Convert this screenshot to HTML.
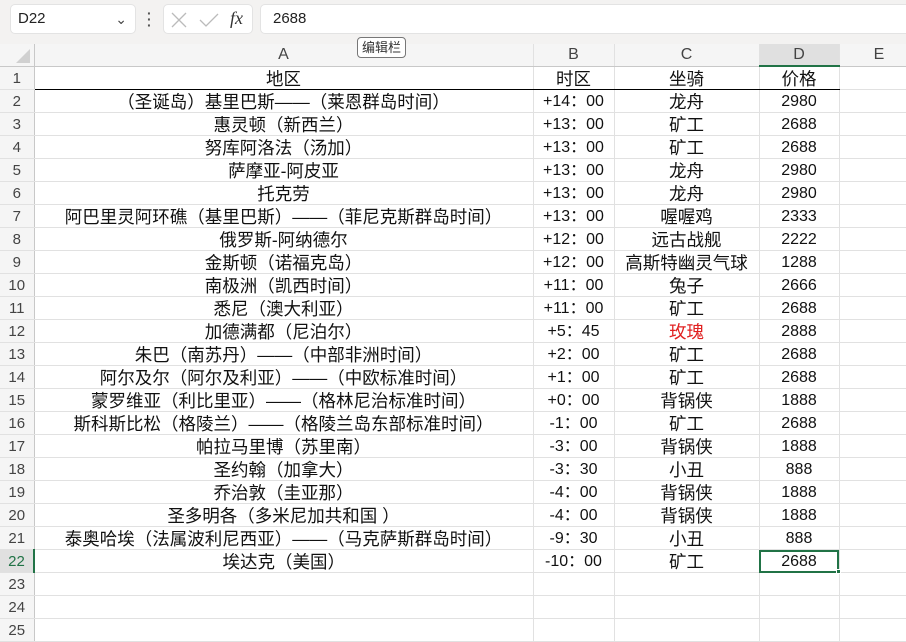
<!DOCTYPE html>
<html><head><meta charset="utf-8"><style>
*{box-sizing:border-box;margin:0;padding:0}
body{width:906px;height:640px;overflow:hidden;background:#fff;font-family:"Liberation Sans","Noto Sans CJK SC",sans-serif;position:relative}
.top{position:absolute;left:0;top:0;width:906px;height:44px;background:#f3f2f1}
.nb{position:absolute;left:10px;top:4px;width:126px;height:30px;background:#fff;border:1px solid #e3e3e3;border-radius:5px;font-size:15px;line-height:28px;padding-left:7px;color:#222}
.fb{position:absolute;left:163px;top:4px;width:90px;height:30px;background:#fff;border:1px solid #e3e3e3;border-radius:5px}
.fx{position:absolute;left:260px;top:4px;width:660px;height:30px;background:#fff;border:1px solid #e3e3e3;border-radius:5px;font-size:15px;line-height:28px;padding-left:12px;color:#222}
.tip{position:absolute;left:357px;top:37px;width:49px;height:21px;border:1px solid #777;border-radius:4px;background:#fff;font-size:13px;line-height:19px;text-align:center;color:#333;z-index:5}
table{position:absolute;left:0;top:44px;border-collapse:collapse;table-layout:fixed;width:919px}
td{height:23px;border-right:1px solid #e1e1e1;border-bottom:1px solid #e1e1e1;text-align:center;font-size:17.5px;color:#111;white-space:nowrap;overflow:hidden;padding:2px 0 0 0;line-height:20px}
tr.h td{height:22px;padding:0;line-height:20px;background:#f5f5f5;color:#444;font-size:16px;border-bottom:1px solid #c8c8c8}
td.r{background:#f5f5f5;color:#444;font-size:15px;text-align:center;border-right:1px solid #c8c8c8}
td.n{font-size:16px}
tr.one td.c{border-bottom:1px solid #000}
.red{color:#e02020}
</style></head><body>
<div class="top"></div>
<div class="nb">D22<span style="position:absolute;right:8px;top:0;font-size:14px;color:#444">&#8964;</span></div>
<div style="position:absolute;left:147px;top:10px;width:3px;height:18px;color:#555;font-size:14px;line-height:6px;font-weight:bold">·<br>·<br>·</div>
<div class="fb"><svg width="90" height="30" style="position:absolute;left:0;top:0"><path d="M8 8 L22 22 M22 8 L8 22" stroke="#bbb" stroke-width="1.3"/><path d="M36 15 L42 21 L54 9" stroke="#bbb" stroke-width="1.3" fill="none"/></svg><span style="position:absolute;left:66px;top:3px;font-family:'Liberation Serif',serif;font-style:italic;font-size:18px;color:#333">fx</span></div>
<div class="fx">2688</div>
<div class="tip">编辑栏</div>
<table>
<colgroup><col style="width:34px"><col style="width:499px"><col style="width:81px"><col style="width:145px"><col style="width:80px"><col style="width:80px"></colgroup>
<tr class="h"><td class="r" style="padding:0"></td><td>A</td><td>B</td><td>C</td><td style="background:#e0e0e0;border-bottom:2px solid #217346">D</td><td>E</td></tr>
<tr class="one"><td class="r">1</td><td class="c">地区</td><td class="c">时区</td><td class="c">坐骑</td><td class="c">价格</td><td></td></tr>
<tr><td class="r">2</td><td>（圣诞岛）基里巴斯——（莱恩群岛时间）</td><td class="n">+14：00</td><td>龙舟</td><td class="n">2980</td><td></td></tr>
<tr><td class="r">3</td><td>惠灵顿（新西兰）</td><td class="n">+13：00</td><td>矿工</td><td class="n">2688</td><td></td></tr>
<tr><td class="r">4</td><td>努库阿洛法（汤加）</td><td class="n">+13：00</td><td>矿工</td><td class="n">2688</td><td></td></tr>
<tr><td class="r">5</td><td>萨摩亚-阿皮亚</td><td class="n">+13：00</td><td>龙舟</td><td class="n">2980</td><td></td></tr>
<tr><td class="r">6</td><td>托克劳</td><td class="n">+13：00</td><td>龙舟</td><td class="n">2980</td><td></td></tr>
<tr><td class="r">7</td><td>阿巴里灵阿环礁（基里巴斯）——（菲尼克斯群岛时间）</td><td class="n">+13：00</td><td>喔喔鸡</td><td class="n">2333</td><td></td></tr>
<tr><td class="r">8</td><td>俄罗斯-阿纳德尔</td><td class="n">+12：00</td><td>远古战舰</td><td class="n">2222</td><td></td></tr>
<tr><td class="r">9</td><td>金斯顿（诺福克岛）</td><td class="n">+12：00</td><td>高斯特幽灵气球</td><td class="n">1288</td><td></td></tr>
<tr><td class="r">10</td><td>南极洲（凯西时间）</td><td class="n">+11：00</td><td>兔子</td><td class="n">2666</td><td></td></tr>
<tr><td class="r">11</td><td>悉尼（澳大利亚）</td><td class="n">+11：00</td><td>矿工</td><td class="n">2688</td><td></td></tr>
<tr><td class="r">12</td><td>加德满都（尼泊尔）</td><td class="n">+5：45</td><td class="red">玫瑰</td><td class="n">2888</td><td></td></tr>
<tr><td class="r">13</td><td>朱巴（南苏丹）——（中部非洲时间）</td><td class="n">+2：00</td><td>矿工</td><td class="n">2688</td><td></td></tr>
<tr><td class="r">14</td><td>阿尔及尔（阿尔及利亚）——（中欧标准时间）</td><td class="n">+1：00</td><td>矿工</td><td class="n">2688</td><td></td></tr>
<tr><td class="r">15</td><td>蒙罗维亚（利比里亚）——（格林尼治标准时间）</td><td class="n">+0：00</td><td>背锅侠</td><td class="n">1888</td><td></td></tr>
<tr><td class="r">16</td><td>斯科斯比松（格陵兰）——（格陵兰岛东部标准时间）</td><td class="n">-1：00</td><td>矿工</td><td class="n">2688</td><td></td></tr>
<tr><td class="r">17</td><td>帕拉马里博（苏里南）</td><td class="n">-3：00</td><td>背锅侠</td><td class="n">1888</td><td></td></tr>
<tr><td class="r">18</td><td>圣约翰（加拿大）</td><td class="n">-3：30</td><td>小丑</td><td class="n">888</td><td></td></tr>
<tr><td class="r">19</td><td>乔治敦（圭亚那）</td><td class="n">-4：00</td><td>背锅侠</td><td class="n">1888</td><td></td></tr>
<tr><td class="r">20</td><td>圣多明各（多米尼加共和国 ）</td><td class="n">-4：00</td><td>背锅侠</td><td class="n">1888</td><td></td></tr>
<tr><td class="r">21</td><td>泰奥哈埃（法属波利尼西亚）——（马克萨斯群岛时间）</td><td class="n">-9：30</td><td>小丑</td><td class="n">888</td><td></td></tr>
<tr><td class="r" style="background:#e0e0e0;color:#217346;border-right:2px solid #217346">22</td><td>埃达克（美国）</td><td class="n">-10：00</td><td>矿工</td><td class="n" style="outline:2px solid #217346;outline-offset:-2px">2688</td><td></td></tr>
<tr><td class="r">23</td><td></td><td></td><td></td><td></td><td></td></tr>
<tr><td class="r">24</td><td></td><td></td><td></td><td></td><td></td></tr>
<tr><td class="r">25</td><td></td><td></td><td></td><td></td><td></td></tr>
</table>
<div style="position:absolute;left:836px;top:569px;width:5px;height:5px;background:#217346;border:1px solid #fff"></div>
<svg style="position:absolute;left:14px;top:47px" width="16" height="16"><path d="M16 2 L16 16 L2 16 Z" fill="#d0d0d0"/></svg>
</body></html>
